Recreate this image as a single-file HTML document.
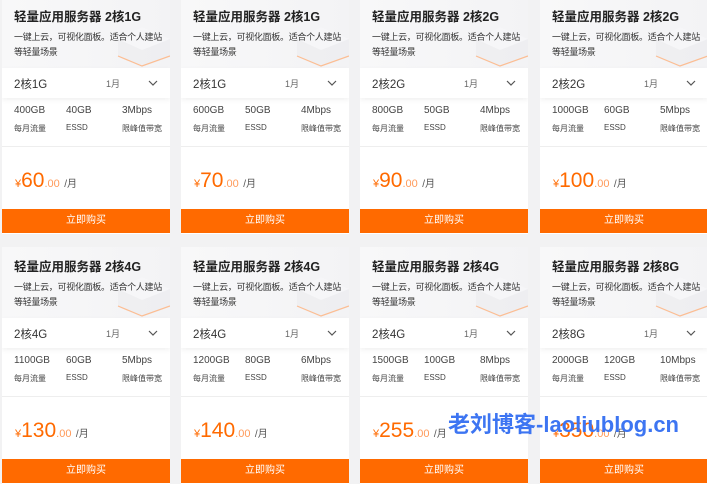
<!DOCTYPE html>
<html><head><meta charset="utf-8"><style>
*{margin:0;padding:0;box-sizing:border-box}
body{width:707px;height:459px;overflow:hidden;background:#f2f2f3;font-family:"Liberation Sans","Noto Sans CJK SC",sans-serif;position:relative}
.c{position:absolute;width:168px;height:237px;background:#fff;overflow:hidden}
.top{position:absolute;left:0;top:0;width:168px;height:72px;background:linear-gradient(90deg,#f8f8f9,#f3f3f5)}
.box{position:absolute;left:112px;top:26px;opacity:.8}
.t{position:absolute;left:12px;top:9px;font-size:12.5px;font-weight:bold;color:#222;white-space:nowrap}
.d{position:absolute;left:12px;top:33px;white-space:nowrap;font-size:9px;letter-spacing:-0.3px;line-height:15px;color:#333}
.sel{position:absolute;left:0;top:71px;width:168px;height:30px;background:#fff;box-shadow:0 2px 5px rgba(0,0,0,.06)}
.sel .a{position:absolute;left:12px;top:8px;font-size:11.5px;color:#333}
.sel .m{position:absolute;left:104px;top:9px;font-size:9px;color:#666}
.sel svg{position:absolute;left:146px;top:12px}
.sp{position:absolute;top:108px;font-size:10px;color:#444}
.sl{position:absolute;top:126px;font-size:8px;color:#444}
.hr{position:absolute;left:0;top:149px;width:168px;height:1px;background:#eee}
.p{position:absolute;left:13px;top:172px;color:#ff6a00;white-space:nowrap}
.p .y{font-size:11px}.p .n{font-size:21px}.p .z{font-size:11px;color:#ff9a5a}.p .u{font-size:10px;color:#555}
.b{position:absolute;left:0;top:212px;width:168px;height:24px;background:#ff6a00;color:#fff;font-size:10px;text-align:center;line-height:24px}
.wm{position:absolute;left:448px;top:407px;font-size:22px;font-weight:bold;color:#3d75f2;white-space:nowrap}
</style></head><body>

<div class="c" style="left:2px;top:-3px"><div class="top"></div><svg class="box" width="56" height="44"><polygon points="4,16 28,4 56,16 56,34 28,44 4,34" fill="#eeeef1"/><polygon points="4,16 28,27 56,16 28,4" fill="#f7f7f9"/><polyline points="4,33 28,43 56,33" fill="none" stroke="#ffb07a" stroke-width="1.2"/></svg><div class="t">轻量应用服务器 2核1G</div><div class="d">一键上云，可视化面板。适合个人建站<br>等轻量场景</div><div class="sel"><span class="a">2核1G</span><span class="m">1月</span><svg width="10" height="6"><polyline points="1,1 5,5 9,1" fill="none" stroke="#555" stroke-width="1.2"/></svg></div><div class="sp" style="left:12px">400GB</div><div class="sp" style="left:64px">40GB</div><div class="sp" style="left:120px">3Mbps</div><div class="sl" style="left:12px">每月流量</div><div class="sl" style="left:64px">ESSD</div><div class="sl" style="left:120px">限峰值带宽</div><div class="hr"></div><div class="p"><span class="y">¥</span><span class="n">60</span><span class="z">.00</span> <span class="u">/月</span></div><div class="b">立即购买</div></div>

<div class="c" style="left:181px;top:-3px"><div class="top"></div><svg class="box" width="56" height="44"><polygon points="4,16 28,4 56,16 56,34 28,44 4,34" fill="#eeeef1"/><polygon points="4,16 28,27 56,16 28,4" fill="#f7f7f9"/><polyline points="4,33 28,43 56,33" fill="none" stroke="#ffb07a" stroke-width="1.2"/></svg><div class="t">轻量应用服务器 2核1G</div><div class="d">一键上云，可视化面板。适合个人建站<br>等轻量场景</div><div class="sel"><span class="a">2核1G</span><span class="m">1月</span><svg width="10" height="6"><polyline points="1,1 5,5 9,1" fill="none" stroke="#555" stroke-width="1.2"/></svg></div><div class="sp" style="left:12px">600GB</div><div class="sp" style="left:64px">50GB</div><div class="sp" style="left:120px">4Mbps</div><div class="sl" style="left:12px">每月流量</div><div class="sl" style="left:64px">ESSD</div><div class="sl" style="left:120px">限峰值带宽</div><div class="hr"></div><div class="p"><span class="y">¥</span><span class="n">70</span><span class="z">.00</span> <span class="u">/月</span></div><div class="b">立即购买</div></div>

<div class="c" style="left:360px;top:-3px"><div class="top"></div><svg class="box" width="56" height="44"><polygon points="4,16 28,4 56,16 56,34 28,44 4,34" fill="#eeeef1"/><polygon points="4,16 28,27 56,16 28,4" fill="#f7f7f9"/><polyline points="4,33 28,43 56,33" fill="none" stroke="#ffb07a" stroke-width="1.2"/></svg><div class="t">轻量应用服务器 2核2G</div><div class="d">一键上云，可视化面板。适合个人建站<br>等轻量场景</div><div class="sel"><span class="a">2核2G</span><span class="m">1月</span><svg width="10" height="6"><polyline points="1,1 5,5 9,1" fill="none" stroke="#555" stroke-width="1.2"/></svg></div><div class="sp" style="left:12px">800GB</div><div class="sp" style="left:64px">50GB</div><div class="sp" style="left:120px">4Mbps</div><div class="sl" style="left:12px">每月流量</div><div class="sl" style="left:64px">ESSD</div><div class="sl" style="left:120px">限峰值带宽</div><div class="hr"></div><div class="p"><span class="y">¥</span><span class="n">90</span><span class="z">.00</span> <span class="u">/月</span></div><div class="b">立即购买</div></div>

<div class="c" style="left:540px;top:-3px"><div class="top"></div><svg class="box" width="56" height="44"><polygon points="4,16 28,4 56,16 56,34 28,44 4,34" fill="#eeeef1"/><polygon points="4,16 28,27 56,16 28,4" fill="#f7f7f9"/><polyline points="4,33 28,43 56,33" fill="none" stroke="#ffb07a" stroke-width="1.2"/></svg><div class="t">轻量应用服务器 2核2G</div><div class="d">一键上云，可视化面板。适合个人建站<br>等轻量场景</div><div class="sel"><span class="a">2核2G</span><span class="m">1月</span><svg width="10" height="6"><polyline points="1,1 5,5 9,1" fill="none" stroke="#555" stroke-width="1.2"/></svg></div><div class="sp" style="left:12px">1000GB</div><div class="sp" style="left:64px">60GB</div><div class="sp" style="left:120px">5Mbps</div><div class="sl" style="left:12px">每月流量</div><div class="sl" style="left:64px">ESSD</div><div class="sl" style="left:120px">限峰值带宽</div><div class="hr"></div><div class="p"><span class="y">¥</span><span class="n">100</span><span class="z">.00</span> <span class="u">/月</span></div><div class="b">立即购买</div></div>

<div class="c" style="left:2px;top:247px"><div class="top"></div><svg class="box" width="56" height="44"><polygon points="4,16 28,4 56,16 56,34 28,44 4,34" fill="#eeeef1"/><polygon points="4,16 28,27 56,16 28,4" fill="#f7f7f9"/><polyline points="4,33 28,43 56,33" fill="none" stroke="#ffb07a" stroke-width="1.2"/></svg><div class="t">轻量应用服务器 2核4G</div><div class="d">一键上云，可视化面板。适合个人建站<br>等轻量场景</div><div class="sel"><span class="a">2核4G</span><span class="m">1月</span><svg width="10" height="6"><polyline points="1,1 5,5 9,1" fill="none" stroke="#555" stroke-width="1.2"/></svg></div><div class="sp" style="left:12px">1100GB</div><div class="sp" style="left:64px">60GB</div><div class="sp" style="left:120px">5Mbps</div><div class="sl" style="left:12px">每月流量</div><div class="sl" style="left:64px">ESSD</div><div class="sl" style="left:120px">限峰值带宽</div><div class="hr"></div><div class="p"><span class="y">¥</span><span class="n">130</span><span class="z">.00</span> <span class="u">/月</span></div><div class="b">立即购买</div></div>

<div class="c" style="left:181px;top:247px"><div class="top"></div><svg class="box" width="56" height="44"><polygon points="4,16 28,4 56,16 56,34 28,44 4,34" fill="#eeeef1"/><polygon points="4,16 28,27 56,16 28,4" fill="#f7f7f9"/><polyline points="4,33 28,43 56,33" fill="none" stroke="#ffb07a" stroke-width="1.2"/></svg><div class="t">轻量应用服务器 2核4G</div><div class="d">一键上云，可视化面板。适合个人建站<br>等轻量场景</div><div class="sel"><span class="a">2核4G</span><span class="m">1月</span><svg width="10" height="6"><polyline points="1,1 5,5 9,1" fill="none" stroke="#555" stroke-width="1.2"/></svg></div><div class="sp" style="left:12px">1200GB</div><div class="sp" style="left:64px">80GB</div><div class="sp" style="left:120px">6Mbps</div><div class="sl" style="left:12px">每月流量</div><div class="sl" style="left:64px">ESSD</div><div class="sl" style="left:120px">限峰值带宽</div><div class="hr"></div><div class="p"><span class="y">¥</span><span class="n">140</span><span class="z">.00</span> <span class="u">/月</span></div><div class="b">立即购买</div></div>

<div class="c" style="left:360px;top:247px"><div class="top"></div><svg class="box" width="56" height="44"><polygon points="4,16 28,4 56,16 56,34 28,44 4,34" fill="#eeeef1"/><polygon points="4,16 28,27 56,16 28,4" fill="#f7f7f9"/><polyline points="4,33 28,43 56,33" fill="none" stroke="#ffb07a" stroke-width="1.2"/></svg><div class="t">轻量应用服务器 2核4G</div><div class="d">一键上云，可视化面板。适合个人建站<br>等轻量场景</div><div class="sel"><span class="a">2核4G</span><span class="m">1月</span><svg width="10" height="6"><polyline points="1,1 5,5 9,1" fill="none" stroke="#555" stroke-width="1.2"/></svg></div><div class="sp" style="left:12px">1500GB</div><div class="sp" style="left:64px">100GB</div><div class="sp" style="left:120px">8Mbps</div><div class="sl" style="left:12px">每月流量</div><div class="sl" style="left:64px">ESSD</div><div class="sl" style="left:120px">限峰值带宽</div><div class="hr"></div><div class="p"><span class="y">¥</span><span class="n">255</span><span class="z">.00</span> <span class="u">/月</span></div><div class="b">立即购买</div></div>

<div class="c" style="left:540px;top:247px"><div class="top"></div><svg class="box" width="56" height="44"><polygon points="4,16 28,4 56,16 56,34 28,44 4,34" fill="#eeeef1"/><polygon points="4,16 28,27 56,16 28,4" fill="#f7f7f9"/><polyline points="4,33 28,43 56,33" fill="none" stroke="#ffb07a" stroke-width="1.2"/></svg><div class="t">轻量应用服务器 2核8G</div><div class="d">一键上云，可视化面板。适合个人建站<br>等轻量场景</div><div class="sel"><span class="a">2核8G</span><span class="m">1月</span><svg width="10" height="6"><polyline points="1,1 5,5 9,1" fill="none" stroke="#555" stroke-width="1.2"/></svg></div><div class="sp" style="left:12px">2000GB</div><div class="sp" style="left:64px">120GB</div><div class="sp" style="left:120px">10Mbps</div><div class="sl" style="left:12px">每月流量</div><div class="sl" style="left:64px">ESSD</div><div class="sl" style="left:120px">限峰值带宽</div><div class="hr"></div><div class="p"><span class="y">¥</span><span class="n">350</span><span class="z">.00</span> <span class="u">/月</span></div><div class="b">立即购买</div></div>

<div class="wm">老刘博客-laoliublog.cn</div>
</body></html>
